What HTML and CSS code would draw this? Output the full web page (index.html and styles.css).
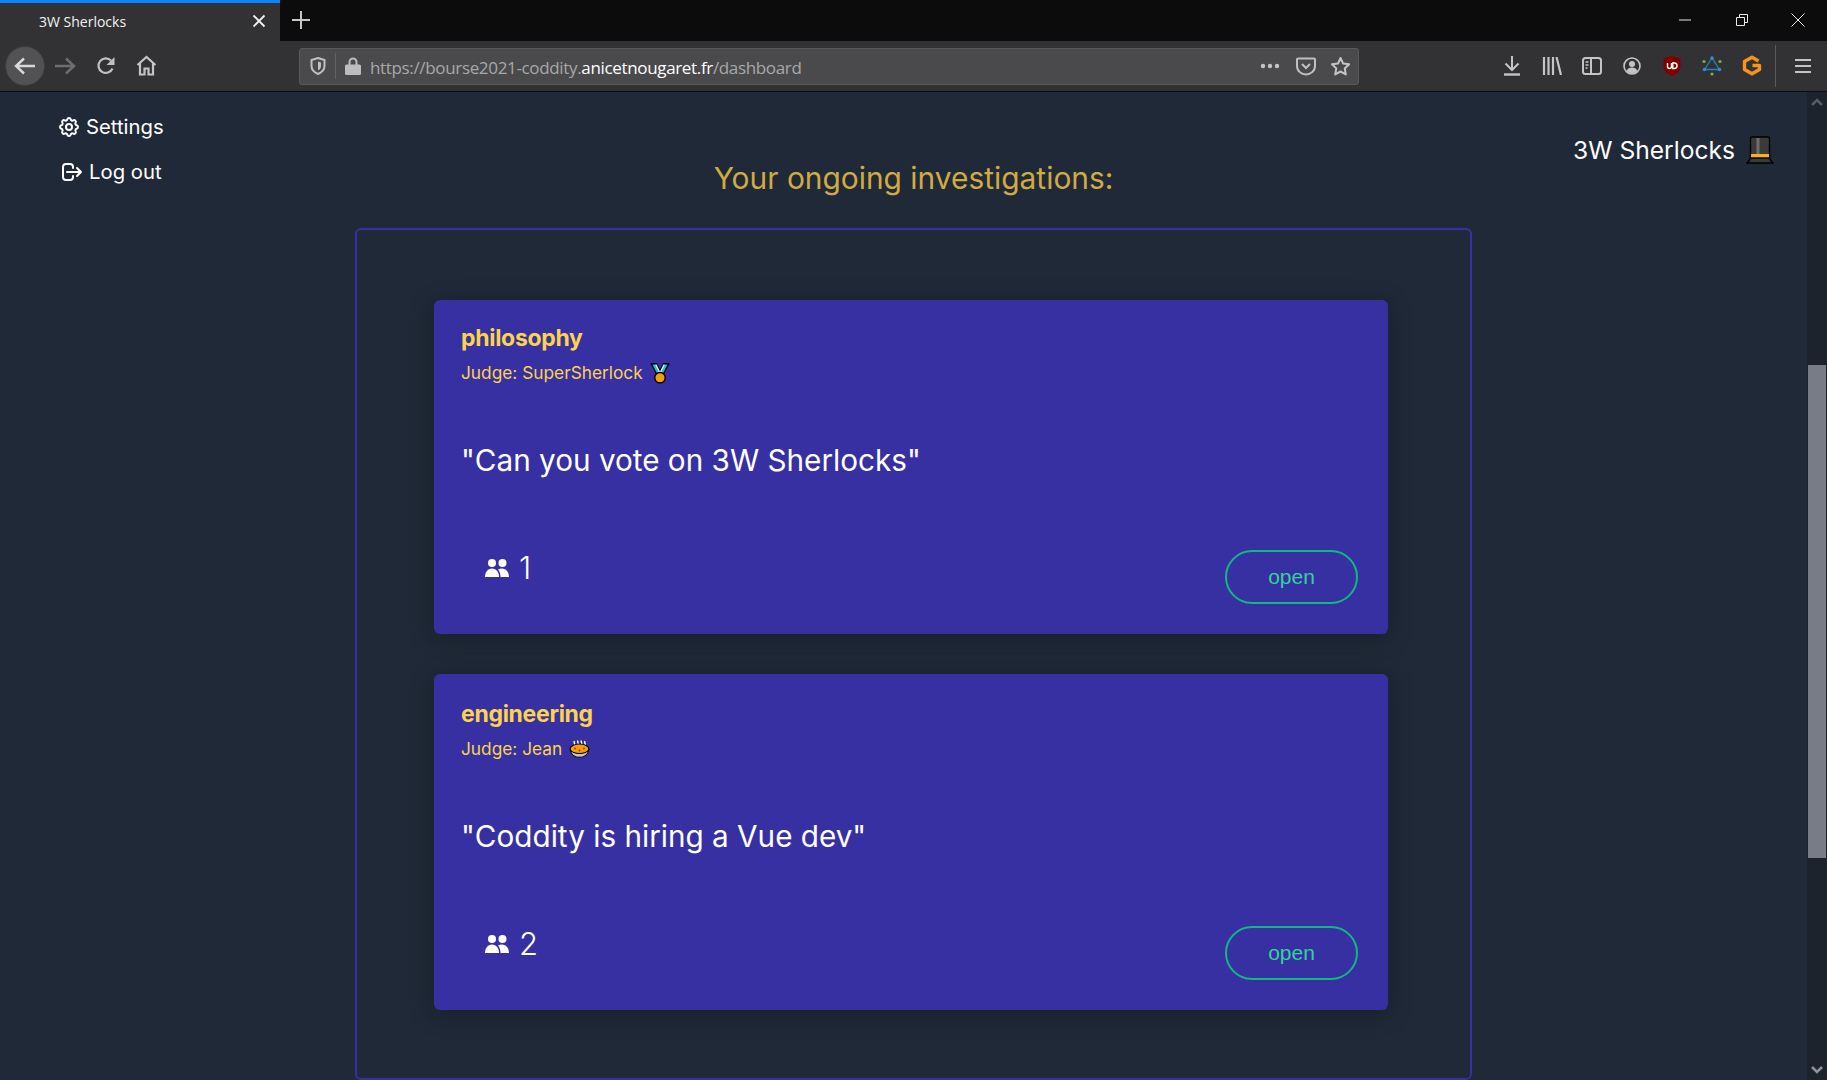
FILE: index.html
```html
<!DOCTYPE html>
<html lang="en">

<head>
    <meta charset="UTF-8">
    <title>3W Sherlocks</title>
    <link rel="stylesheet" href="styles.css">
</head>

<body>
    <header class="browser">
        <div class="tabbar">
            <div class="tab">
                <span class="tab-title">3W Sherlocks</span>
                <svg class="tab-close" width="14" height="14" viewBox="0 0 14 14"><path d="M1.500 1.500l11 11M12.500 1.500l-11 11" stroke="#f2f2f2" stroke-width="1.800"/></svg>
            </div>
            <svg class="new-tab" width="18" height="18" viewBox="0 0 18 18"><path d="M9 0v18M0 9h18" stroke="#c8c8c8" stroke-width="2"/></svg>
            <div class="window-controls">
                <svg width="14" height="14" viewBox="0 0 14 14"><path d="M1 7h12" stroke="#e8e8e8"/></svg>
                <svg width="14" height="14" viewBox="0 0 14 14"><path d="M1.500 4.500h8v8h-8zM4.500 4.500v-3h8v8h-3" fill="none" stroke="#e8e8e8"/></svg>
                <svg width="14" height="14" viewBox="0 0 14 14"><path d="M.5.5l13 13M13.500.5l-13 13" stroke="#e8e8e8"/></svg>
            </div>
        </div>
        <div class="toolbar">
            <button class="tool tool-back">
                <svg width="22" height="18" viewBox="0 0 22 18"><path d="M10 1.500L2 9l8 7.500M2.500 9H21" fill="none" stroke="#d8d8d8" stroke-width="2.400"/></svg>
            </button>
            <button class="tool">
                <svg width="22" height="18" viewBox="0 0 22 18"><path d="M12 1.500L20 9l-8 7.500M19.500 9H1" fill="none" stroke="#6e6e6e" stroke-width="2.400"/></svg>
            </button>
            <button class="tool tool-reload">
                <svg width="20" height="20" viewBox="0 0 20 20"><path d="M16.500 12.500A7.300 7.300 0 1 1 15 4.500" fill="none" stroke="#c0c0c0" stroke-width="2.200"/><path d="M18.500 1v8h-8z" fill="#c0c0c0"/></svg>
            </button>
            <button class="tool">
                <svg width="21" height="21" viewBox="0 0 21 21"><path d="M1.500 10L10.500 2l9 8M4 8v11.500h4.500v-6h4v6H17V8" fill="none" stroke="#c4c4c4" stroke-width="2.200"/></svg>
            </button>

            <div class="urlbar">
                <svg class="url-shield" width="16" height="18" viewBox="0 0 16 18"><path d="M8 1l6.500 2v6c0 4-3 6.500-6.500 8-3.500-1.500-6.500-4-6.500-8V3z" fill="none" stroke="#c0c0c0" stroke-width="2"/><path d="M8 4.500l3 1v3.500c0 2-1.300 3.500-3 4.500z" fill="#c0c0c0"/></svg>
                <span class="url-sep"></span>
                <svg class="url-lock" width="16" height="18" viewBox="0 0 16 18"><path d="M4.500 8V5a3.500 3.500 0 0 1 7 0v3" fill="none" stroke="#bdbdbd" stroke-width="2"/><rect y="7.500" width="16" height="10.500" rx="1.500" fill="#bdbdbd"/></svg>
                <span class="url-text">https://bourse2021-coddity.<b>anicetnougaret.fr</b>/dashboard</span>
                <svg class="url-more" width="20" height="6" viewBox="0 0 20 6"><circle cx="3" cy="3" r="2.200" fill="#c4c4c4"/><circle cx="10" cy="3" r="2.200" fill="#c4c4c4"/><circle cx="17" cy="3" r="2.200" fill="#c4c4c4"/></svg>
                <svg class="url-pocket" width="20" height="19" viewBox="0 0 20 19"><path d="M2 1.500h16a1 1 0 0 1 1 1V9c0 5-4.500 8.500-9 8.500S1 14 1 9V2.500a1 1 0 0 1 1-1z" fill="none" stroke="#c0c0c0" stroke-width="2"/><path d="M6 7l4 4 4-4" fill="none" stroke="#c0c0c0" stroke-width="2"/></svg>
                <svg class="url-star" width="21" height="20" viewBox="0 0 21 20"><path d="M10.500 2l2.600 5.500 6 .8-4.400 4.100 1.100 6-5.300-2.900-5.300 2.900 1.100-6L2 8.300l6-.8z" fill="none" stroke="#c4c4c4" stroke-width="2" stroke-linejoin="round"/></svg>
            </div>

            <div class="tool-group">
                <button class="tool">
                    <svg width="18" height="20" viewBox="0 0 18 20"><path d="M9 0v13M2.500 7.500L9 14l6.500-6.500" fill="none" stroke="#c4c4c4" stroke-width="2"/><path d="M1 18.500h16" stroke="#c4c4c4" stroke-width="2.400"/></svg>
                </button>
                <button class="tool">
                    <svg width="20" height="18" viewBox="0 0 20 18"><path d="M2 0v18M6.500 0v18M11 0v18M14.500 0l4.500 18" fill="none" stroke="#c4c4c4" stroke-width="2.200"/></svg>
                </button>
                <button class="tool">
                    <svg width="20" height="18" viewBox="0 0 20 18"><rect x="1" y="1" width="18" height="16" rx="2.500" fill="none" stroke="#c4c4c4" stroke-width="2"/><path d="M9 1v16" stroke="#c4c4c4" stroke-width="2"/><path d="M3.500 5h3M3.500 8h3M3.500 11h2" stroke="#c4c4c4" stroke-width="1.500"/></svg>
                </button>
                <button class="tool">
                    <svg width="18" height="18" viewBox="0 0 18 18"><circle cx="9" cy="9" r="8" fill="none" stroke="#c4c4c4" stroke-width="1.600"/><circle cx="9" cy="7" r="3" fill="#c4c4c4"/><path d="M3.500 14c1-2.500 3-3.500 5.500-3.500s4.500 1 5.500 3.500c-1.500 1.500-3.500 2.200-5.500 2.200s-4-.7-5.500-2.200z" fill="#c4c4c4"/></svg>
                </button>
                <button class="tool">
                    <svg width="18" height="20" viewBox="0 0 18 20"><path d="M9 0l8.500 2.500V10c0 5-3.500 8-8.500 10-5-2-8.500-5-8.500-10V2.500z" fill="#800000"/><path d="M4.500 7v3.500a2 2 0 0 0 4 0V7" fill="none" stroke="#fff" stroke-width="1.400"/><path d="M9.800 7h1.500a2.500 2.500 0 0 1 0 5.500H9.800z" fill="none" stroke="#fff" stroke-width="1.400"/></svg>
                </button>
                <button class="tool">
                    <svg width="20" height="20" viewBox="0 0 20 20"><path d="M10 2L2.500 13.500h15z" fill="none" stroke="#2f7fb8" stroke-width="1.300"/><circle cx="10" cy="2" r="1.800" fill="#2f8fd0"/><circle cx="2.500" cy="13.500" r="1.800" fill="#2f8fd0"/><circle cx="17.500" cy="13.500" r="1.800" fill="#2f8fd0"/><circle cx="2" cy="5.500" r="1.600" fill="#7cb342"/><circle cx="18" cy="5.500" r="1.600" fill="#7cb342"/><circle cx="10" cy="18" r="1.600" fill="#7cb342"/></svg>
                </button>
                <button class="tool">
                    <svg width="20" height="21" viewBox="0 0 20 21"><path d="M16.500 6L10 2.200 2.500 6.500v8L10 18.800l7.500-4.300V10.500H10.500" fill="none" stroke="#f7941d" stroke-width="3.400" stroke-linejoin="round"/></svg>
                </button>
            </div>
            <span class="tool-sep"></span>
            <button class="tool">
                <svg width="16" height="16" viewBox="0 0 16 16"><path d="M0 2h16M0 8h16M0 14h16" stroke="#c4c4c4" stroke-width="2.200"/></svg>
            </button>
        </div>
    </header>

    <div class="viewport">
        <div class="page">
            <nav class="side-nav">
                <a class="nav-link">
                    <svg width="24" height="24" viewBox="0 0 24 24" fill="none" stroke="#fff" stroke-width="2"><path d="M10.325 4.317c.426-1.756 2.924-1.756 3.350 0a1.724 1.724 0 002.573 1.066c1.543-.94 3.310.826 2.370 2.370a1.724 1.724 0 001.065 2.572c1.756.426 1.756 2.924 0 3.350a1.724 1.724 0 00-1.066 2.573c.94 1.543-.826 3.310-2.370 2.370a1.724 1.724 0 00-2.572 1.065c-.426 1.756-2.924 1.756-3.350 0a1.724 1.724 0 00-2.573-1.066c-1.543.94-3.310-.826-2.370-2.370a1.724 1.724 0 00-1.065-2.572c-1.756-.426-1.756-2.924 0-3.350a1.724 1.724 0 001.066-2.573c-.94-1.543.826-3.310 2.370-2.370.996.608 2.296.07 2.572-1.065z"/><path d="M15 12a3 3 0 11-6 0 3 3 0 016 0z"/></svg>
                    Settings
                </a>
                <a class="nav-link nav-logout">
                    <svg width="24" height="24" viewBox="0 0 24 24" fill="none" stroke="#fff" stroke-width="2" stroke-linecap="round" stroke-linejoin="round"><path d="M17 16l4-4m0 0l-4-4m4 4H7m6 4v1a3 3 0 01-3 3H6a3 3 0 01-3-3V7a3 3 0 013-3h4a3 3 0 013 3v1"/></svg>
                    Log out
                </a>
            </nav>

            <main class="content">
                <h1 class="heading">Your ongoing investigations:</h1>
                <section class="board">
                    <article class="card">
                        <h2 class="card-topic">philosophy</h2>
                        <p class="card-judge">Judge: SuperSherlock
                            <svg class="emoji" width="20" height="21" viewBox="0 0 18 20"><path d="M.7.7h5L9 7.500 12.300.7h5L11.500 12h-5z" fill="#27b5d8" stroke="#000" stroke-width="1.300"/><path d="M5 1.500L9 9.500l4-8" fill="none" stroke="#d9f6ff" stroke-width="1.300"/><circle cx="9" cy="14" r="5" fill="#f59e0b" stroke="#000" stroke-width="1.300"/></svg>
                        </p>
                        <p class="card-question">"Can you vote on 3W Sherlocks"</p>
                        <div class="card-footer">
                            <span class="members">
                                <svg width="24" height="20" viewBox="0 0 24 20"><circle cx="7" cy="5" r="4" fill="#fff"/><circle cx="17.500" cy="5" r="4" fill="#fff"/><path d="M0 19c0-5 3-8.500 7-8.500s7 3.500 7 8.500z" fill="#fff"/><path d="M15.500 19c0-3-.8-5.700-2.500-7.500 1.200-.7 2.800-1 4-1 4 0 7 3.500 7 8.500z" fill="#fff"/></svg>
                                1
                            </span>
                            <button class="open-btn">open</button>
                        </div>
                    </article>
                    <article class="card">
                        <h2 class="card-topic">engineering</h2>
                        <p class="card-judge">Judge: Jean
                            <svg class="emoji" width="21" height="18" viewBox="0 0 21 18"><path d="M6 6L5 1M9.500 5L8.500.5M13 5L12 .5M16.500 6l-1-5" stroke="#fff" stroke-width="1.400"/><ellipse cx="10.500" cy="9" rx="9.500" ry="5" fill="#f59e0b" stroke="#000" stroke-width="1.200"/><path d="M1.200 10c.8 4 2.500 7.300 9.300 7.300s8.500-3.300 9.300-7.300c-2 2.500-5 3.500-9.300 3.500S3.200 12.500 1.200 10z" fill="#c4c4c4" stroke="#000" stroke-width="1.100"/><circle cx="6" cy="8.500" r=".9" fill="#c0281c"/><circle cx="10.500" cy="10.500" r=".9" fill="#c0281c"/><circle cx="15" cy="8.500" r=".9" fill="#c0281c"/></svg>
                        </p>
                        <p class="card-question">"Coddity is hiring a Vue dev"</p>
                        <div class="card-footer">
                            <span class="members">
                                <svg width="24" height="20" viewBox="0 0 24 20"><circle cx="7" cy="5" r="4" fill="#fff"/><circle cx="17.500" cy="5" r="4" fill="#fff"/><path d="M0 19c0-5 3-8.500 7-8.500s7 3.500 7 8.500z" fill="#fff"/><path d="M15.500 19c0-3-.8-5.700-2.500-7.500 1.200-.7 2.800-1 4-1 4 0 7 3.500 7 8.500z" fill="#fff"/></svg>
                                2
                            </span>
                            <button class="open-btn">open</button>
                        </div>
                    </article>
                </section>
            </main>

            <div class="brand">
                <span>3W Sherlocks</span>
                <svg width="28" height="28" viewBox="0 0 28 28"><path d="M6 1h16a1.500 1.500 0 0 1 1.500 1.500V22h-19V2.500A1.500 1.500 0 0 1 6 1z" fill="#3a3a3a" stroke="#000" stroke-width="1.500"/><rect x="10.500" y="2" width="3" height="25" fill="#6e6e6e"/><rect x="5" y="18" width="18" height="4" fill="#f9b115"/><path d="M4.500 22c0 2-2 3.500-3.500 5h26c-1.500-1.500-3.500-3-3.500-5z" fill="#3a3a3a" stroke="#000" stroke-width="1.500"/></svg>
            </div>
        </div>

        <div class="scrollbar">
            <span class="scroll-arrow">
                <svg width="12" height="8" viewBox="0 0 12 8"><path d="M1 7l5-5 5 5" fill="none" stroke="#555b66" stroke-width="2.600"/></svg>
            </span>
            <div class="scroll-thumb"></div>
            <span class="scroll-arrow scroll-arrow-down">
                <svg width="12" height="8" viewBox="0 0 12 8"><path d="M1 1l5 5 5-5" fill="none" stroke="#8c919b" stroke-width="2.600"/></svg>
            </span>
        </div>
    </div>
</body>

</html>
```

FILE: styles.css
```css
* {
    box-sizing: border-box;
}

html,
body {
    margin: 0;
    height: 100%;
}

body {
    display: flex;
    flex-direction: column;
    height: 1080px;
    overflow: hidden;
    background-color: #1f2937;
    font-family: Inter, "Liberation Sans", sans-serif;
    color: #fff;
}

/* browser chrome */

.browser {
    flex: none;
    font-family: "Open Sans", "Noto Sans", sans-serif;
}

.tabbar {
    display: flex;
    align-items: center;
    height: 41px;
    padding-bottom: 2px;
    background-color: #0c0c0d;
}

.tab {
    display: flex;
    align-items: center;
    justify-content: space-between;
    width: 280px;
    height: 41px;
    margin-bottom: -2px;
    padding: 0 14px 2px 39px;
    border-top: 3px solid #0a84ff;
    background-color: #323234;
    font-size: 14px;
    color: #f2f2f2;
}

.new-tab {
    margin-left: 12px;
}

.window-controls {
    display: flex;
    gap: 42.500px;
    margin-left: auto;
    padding-right: 22px;
}

.toolbar {
    display: flex;
    align-items: center;
    height: 51px;
    padding: 0 4px 1px 5px;
    border-bottom: 1px solid #0c0c0d;
    background-color: #323234;
}

.tool {
    display: flex;
    align-items: center;
    justify-content: center;
    flex: none;
    width: 40px;
    height: 40px;
    padding: 0;
    border: none;
    border-radius: 50%;
    background: none;
}

.tool-back {
    background-color: #525254;
    border: 1px solid #3e3e40;
}

.tool-reload {
    margin-left: 1px;
}

.urlbar {
    display: flex;
    align-items: center;
    width: 1062px;
    height: 37px;
    margin: 1px 0 0 133px;
    padding: 0 7px 0 10px;
    border: 1px solid #5a5a5d;
    border-radius: 3px;
    background-color: #4a4a4d;
    font-size: 17px;
    color: #a8a8a8;
}

.url-sep {
    width: 1px;
    height: 26px;
    margin: 0 9px;
    background-color: #626265;
}

.url-text {
    margin-left: 9px;
    padding-top: 2px;
    letter-spacing: -0.34px;
}

.url-text b {
    font-weight: 400;
    color: #fff;
}

.url-more {
    margin-left: auto;
}

.url-pocket {
    margin-left: 16px;
}

.url-star {
    margin-left: 14px;
}

.tool-group {
    display: flex;
    margin-left: 133px;
}

.tool-sep {
    width: 1px;
    height: 42px;
    margin: 0 7px 0 3px;
    background-color: #5a5a5c;
}

/* page */

.viewport {
    display: flex;
    flex: 1;
    min-height: 0;
}

.page {
    display: grid;
    grid-template-columns: 355px 1117px 1fr;
    flex: 1;
    min-width: 0;
}

.side-nav {
    display: flex;
    flex-direction: column;
    gap: 18px;
    padding: 21px 0 0 57px;
}

.nav-link {
    display: flex;
    align-items: center;
    gap: 5px;
    height: 27px;
    font-size: 20.300px;
}

.nav-logout {
    margin-left: 3px;
}

.heading {
    margin: 0;
    height: 136px;
    padding-top: 66px;
    font-size: 29.900px;
    line-height: 40px;
    font-weight: 400;
    text-align: center;
    color: #d0ab42;
}

.board {
    display: flex;
    flex-direction: column;
    gap: 40px;
    height: 852px;
    padding: 70px 82px 0 77px;
    border: 2px solid #3730a3;
    border-radius: 6px;
}

.card {
    display: flex;
    flex-direction: column;
    height: 334px;
    padding: 23px 30px 30px 27px;
    border-radius: 6px;
    background-color: #3730a3;
    box-shadow: 0 4px 24px rgba(0, 0, 0, 0.25);
}

.card:last-child {
    height: 336px;
    padding-top: 25px;
}

.card-topic {
    margin: 0;
    font-size: 23px;
    line-height: 30px;
    font-weight: 700;
    letter-spacing: -0.3px;
    color: #fcd34d;
}

.card-judge {
    display: flex;
    align-items: center;
    gap: 7px;
    height: 24px;
    margin: 8px 0 0;
    font-size: 17.300px;
    line-height: 24px;
    color: #fcd34d;
}

.card-question {
    margin: 55px 0 0;
    font-size: 29.700px;
    line-height: 40px;
}

.card-footer {
    display: flex;
    align-items: flex-end;
    justify-content: space-between;
    margin-top: auto;
}

.members {
    display: flex;
    align-items: center;
    gap: 10px;
    margin: 0 0 16px 24px;
    font-size: 31px;
    line-height: 40px;
    font-weight: 300;
}

.open-btn {
    width: 133px;
    height: 54px;
    border: 2px solid #10b981;
    border-radius: 27px;
    background: none;
    font-family: "Liberation Sans", Arial, sans-serif;
    font-size: 21px;
    color: #34d399;
}

.brand {
    display: flex;
    align-items: center;
    justify-content: flex-end;
    gap: 11px;
    height: 34px;
    margin-top: 41px;
    padding-right: 33px;
    font-size: 24.600px;
}

/* scrollbar */

.scrollbar {
    position: relative;
    flex: none;
    width: 20px;
    background-color: #1c232d;
}

.scroll-arrow {
    position: absolute;
    top: 0;
    left: 0;
    display: flex;
    align-items: center;
    justify-content: center;
    width: 20px;
    height: 20px;
}

.scroll-arrow-down {
    top: auto;
    bottom: 0;
}

.scroll-thumb {
    position: absolute;
    top: 273px;
    left: 1px;
    width: 18px;
    height: 493px;
    background-color: #787c87;
}
```
